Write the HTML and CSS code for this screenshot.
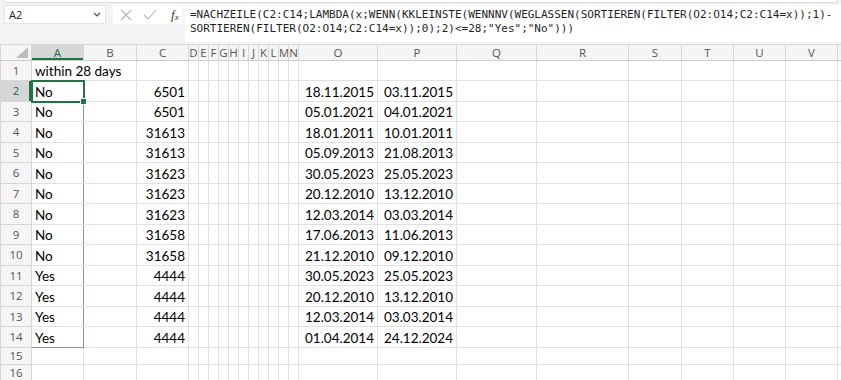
FILE: index.html
```html
<html>
  <title>Mappe1 - Excel</title>
  <head>
    <meta name="viewport" content="width=device-width, initial-scale=1.0" />
    <link rel="stylesheet" href="styles.css">
  </head>
  <body>
    <div class="ribbon-edge"></div>
    <div class="formula-bar">
      <div class="name-box">
        <span>A2</span>
        <svg class="chevron" width="8" height="5" viewBox="0 0 8 5">
          <polyline points="1,1 4,4 7,1" fill="none" stroke="#555" stroke-width="1.2" />
        </svg>
      </div>
      <div class="fx-box">
        <svg width="12" height="12" viewBox="0 0 12 12">
          <path d="M1 1 L11 11 M11 1 L1 11" stroke="#b3b3b3" stroke-width="1.1" fill="none" />
        </svg>
        <svg width="14" height="11" viewBox="0 0 14 11">
          <polyline points="1,6 5,10 13,1" stroke="#b3b3b3" stroke-width="1.1" fill="none" />
        </svg>
        <span class="fx">f<sub>x</sub></span>
      </div>
      <div class="formula">=NACHZEILE(C2:C14;LAMBDA(x;WENN(KKLEINSTE(WENNNV(WEGLASSEN(SORTIEREN(FILTER(O2:O14;C2:C14=x));1)-<br>SORTIEREN(FILTER(O2:O14;C2:C14=x));0);2)&lt;=28;"Yes";"No")))</div>
    </div>
    <table class="sheet">
      <colgroup id="cols"></colgroup>
      <tbody id="grid"></tbody>
    </table>
    <script>
      const cols = [
        ["", 31], ["A", 52], ["B", 53], ["C", 52],
        ["D", 10], ["E", 10], ["F", 10], ["G", 10], ["H", 10], ["I", 10],
        ["J", 10], ["K", 10], ["L", 10], ["M", 10], ["N", 10],
        ["O", 79], ["P", 79], ["Q", 80], ["R", 92], ["S", 53],
        ["T", 52], ["U", 52], ["V", 52], ["", 4],
      ];
      const rows = [
        ["No", 6501, "18.11.2015", "03.11.2015"],
        ["No", 6501, "05.01.2021", "04.01.2021"],
        ["No", 31613, "18.01.2011", "10.01.2011"],
        ["No", 31613, "05.09.2013", "21.08.2013"],
        ["No", 31623, "30.05.2023", "25.05.2023"],
        ["No", 31623, "20.12.2010", "13.12.2010"],
        ["No", 31623, "12.03.2014", "03.03.2014"],
        ["No", 31658, "17.06.2013", "11.06.2013"],
        ["No", 31658, "21.12.2010", "09.12.2010"],
        ["Yes", 4444, "30.05.2023", "25.05.2023"],
        ["Yes", 4444, "20.12.2010", "13.12.2010"],
        ["Yes", 4444, "12.03.2014", "03.03.2014"],
        ["Yes", 4444, "01.04.2014", "24.12.2024"],
      ];

      document.getElementById("cols").innerHTML = cols
        .map((c) => `<col style="width:${c[1]}px">`)
        .join("");

      const emptyCells = (from, to) =>
        cols.slice(from, to).map(() => "<td></td>").join("");

      let html = '<tr class="head"><th class="corner"><span class="tri"></span></th>';
      html += cols
        .slice(1)
        .map((c) => `<th class="${c[0] == "A" ? "sel" : ""}">${c[0]}</th>`)
        .join("");
      html += "</tr>";

      html += '<tr class="r1"><th class="num">1</th><td class="txt spill">within 28 days</td>' + emptyCells(2) + "</tr>";

      rows.forEach((r, i) => {
        const n = i + 2;
        let aClass = "txt";
        if (n == 2) aClass += " active";
        else aClass += " rng";
        if (n == 14) aClass += " rng-end";
        html += `<tr class="r"><th class="num${n == 2 ? " sel" : ""}">${n}</th>`;
        html += `<td class="${aClass}">${r[0]}${n == 2 ? '<span class="cursor"></span>' : ""}</td>`;
        html += "<td></td>";
        html += `<td class="val">${r[1]}</td>`;
        html += emptyCells(4, 15);
        html += `<td class="val">${r[2]}</td><td class="val">${r[3]}</td>`;
        html += emptyCells(17);
        html += "</tr>";
      });

      [15, 16].forEach((n) => {
        html += `<tr class="short"><th class="num">${n}</th>` + emptyCells(1) + "</tr>";
      });

      document.getElementById("grid").innerHTML = html;
    </script>
  </body>
</html>
```

FILE: styles.css
```css
body {
  margin: 0;
  background: #f3f3f3;
  overflow: hidden;
  width: 841px;
  height: 380px;
}
.ribbon-edge {
  height: 2px;
  margin: 0 3px;
  background: #fff;
  border: 1px solid #dcdcdc;
  border-top: none;
  border-radius: 0 0 4px 4px;
}
.formula-bar {
  display: flex;
  align-items: flex-start;
  padding-top: 2px;
  height: 39px;
}
.name-box {
  width: 102px;
  height: 19px;
  margin-left: 4px;
  background: #fff;
  border: 1px solid #e4e4e4;
  display: flex;
  align-items: center;
  justify-content: space-between;
  padding: 0 4px;
  box-sizing: border-box;
  font-family: "Open Sans", sans-serif;
  font-size: 11px;
  color: #222;
}
.fx-box {
  width: 70px;
  height: 19px;
  margin-left: 7px;
  background: #fff;
  display: flex;
  align-items: center;
  gap: 11px;
  padding-left: 7px;
  box-sizing: border-box;
}
.fx {
  font-family: "Liberation Serif", serif;
  font-style: italic;
  font-size: 13px;
  color: #333;
  margin-left: 3px;
}
.fx sub {
  font-size: 9px;
  vertical-align: -1px;
}
.formula {
  flex: 1;
  margin-left: 2px;
  height: 37px;
  background: #fff;
  padding: 3px 0 0 5px;
  box-sizing: border-box;
  font-family: "DejaVu Sans Mono", monospace;
  font-size: 11px;
  line-height: 14px;
  color: #1f1f1f;
  white-space: nowrap;
  overflow: hidden;
}
.sheet {
  border-collapse: collapse;
  table-layout: fixed;
  width: 841px;
  background: #fff;
}
.sheet td {
  border: 1px solid #e1e1e1;
  padding: 0 3px 1px 3px;
  font-family: Lato, sans-serif;
  font-size: 13.5px;
  color: #000;
  white-space: nowrap;
  vertical-align: bottom;
  overflow: visible;
}
.sheet th {
  background: #f5f5f5;
  border: 1px solid #d6d6d6;
  font-family: "Open Sans", sans-serif;
  font-weight: normal;
  font-size: 11.5px;
  color: #555;
  padding: 0;
  overflow: hidden;
}
.head {
  height: 16px;
}
.head th {
  border-bottom-color: #cdcdcd;
}
.head th.sel {
  background: #d6d6d6;
  color: #1e6b41;
  box-shadow: inset 0 -2px 0 #217346;
}
.corner {
  position: relative;
}
.tri {
  position: absolute;
  right: 3px;
  bottom: 2px;
  width: 0;
  height: 0;
  border-left: 12px solid transparent;
  border-bottom: 11px solid #bdbdbd;
}
.num {
  text-align: center;
  font-size: 11px;
  color: #666;
}
th.num.sel {
  background: #d6d6d6;
  color: #1e6b41;
  box-shadow: inset -2px 0 0 #217346;
}
.r1 {
  height: 20px;
}
.r {
  height: 20.5px;
}
.short {
  height: 17px;
}
.txt {
  text-align: left;
}
.val {
  text-align: right;
}
.spill {
  border-right-color: #fff !important;
}
.active {
  position: relative;
}
.cursor {
  position: absolute;
  left: -1px;
  top: -1px;
  right: -2px;
  bottom: -2px;
  border: 2px solid #217346;
}
.cursor::after {
  content: "";
  position: absolute;
  right: -4px;
  bottom: -4px;
  width: 5px;
  height: 5px;
  background: #217346;
  border: 1px solid #fff;
}
.rng {
  border-right: 1px solid #6f95dc !important;
}
.rng-end {
  border-bottom: 1px solid #6f95dc !important;
}
```
